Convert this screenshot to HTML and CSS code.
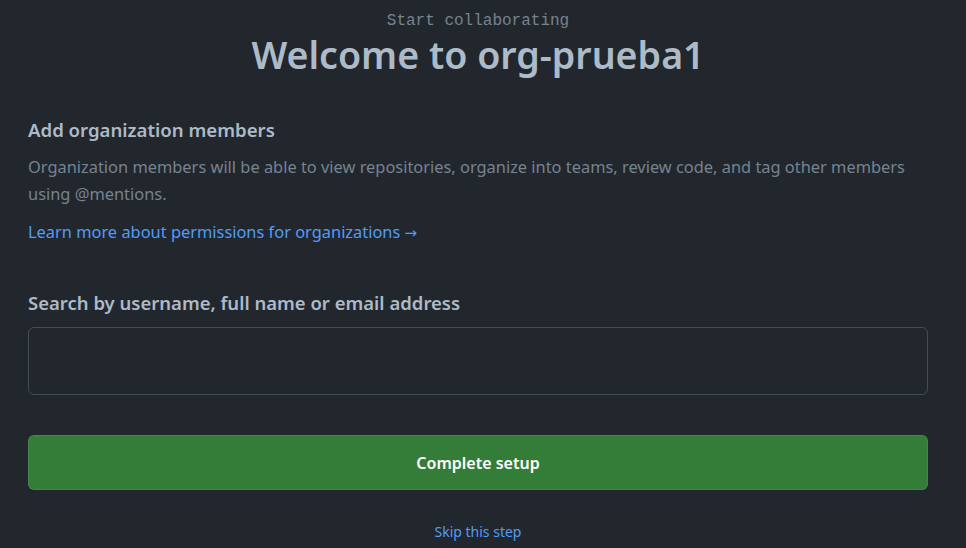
FILE: index.html
```html
<!DOCTYPE html>
<html lang="en">
<head>
<meta charset="utf-8">
<title>Welcome to org-prueba1</title>
<link rel="stylesheet" href="styles.css">
</head>
<body>
<main class="page">
  <header class="hero">
    <p class="eyebrow">Start collaborating</p>
    <h1 class="title">Welcome to org-prueba1</h1>
  </header>
  <section class="section">
    <h2 class="section-title">Add organization members</h2>
    <p class="section-desc">Organization members will be able to view repositories, organize into teams, review code, and tag other members using @mentions.</p>
    <a class="learn" href="#">Learn more about permissions for organizations <span class="arrow">→</span></a>
  </section>
  <form class="form">
    <label class="label" for="search">Search by username, full name or email address</label>
    <input class="input" id="search" type="text">
    <button class="btn" type="button">Complete setup</button>
    <a class="skip" href="#">Skip this step</a>
  </form>
</main>
</body>
</html>
```
FILE: styles.css
```css
html, body {
  margin: 0;
  padding: 0;
  background: #22272e;
}
body {
  font-family: "Noto Sans", "Open Sans", sans-serif;
  color: #adbac7;
}
.page {
  width: 900px;
  margin-left: 28px;
  display: flex;
  flex-direction: column;
}
.hero {
  display: flex;
  flex-direction: column;
  align-items: center;
  padding-top: 13px;
}
.eyebrow {
  margin: 0;
  font-family: "Liberation Mono", monospace;
  font-size: 16px;
  line-height: 16px;
  color: #768390;
}
.title {
  margin: 1px 0 0;
  font-size: 37.6px;
  line-height: 50px;
  font-weight: 600;
  color: #adbac7;
}
.section {
  padding-top: 36px;
  display: flex;
  flex-direction: column;
}
.section-title {
  margin: 0;
  font-size: 18.6px;
  line-height: 28px;
  font-weight: 600;
  color: #adbac7;
}
.section-desc {
  margin: 9px 0 0;
  font-size: 16.4px;
  line-height: 27px;
  color: #768390;
}
.learn {
  margin-top: 13px;
  font-size: 16.4px;
  line-height: 24px;
  color: #539bf5;
  text-decoration: none;
  align-self: flex-start;
}
.arrow {
  font-family: "DejaVu Sans", sans-serif;
  font-size: 15px;
}
.form {
  display: flex;
  flex-direction: column;
  padding-top: 45px;
}
.label {
  font-size: 18.5px;
  line-height: 26px;
  font-weight: 600;
  color: #adbac7;
}
.input {
  margin-top: 11px;
  height: 68px;
  box-sizing: border-box;
  background: #22272e;
  border: 1px solid #444c56;
  border-radius: 6px;
  color: #adbac7;
  font-size: 16px;
  padding: 0 12px;
}
.btn {
  margin-top: 40px;
  height: 55px;
  background: #347d39;
  border: 1px solid rgba(205, 217, 229, 0.1);
  border-radius: 6px;
  color: #ffffff;
  font-family: inherit;
  font-size: 16px;
  font-weight: 600;
}
.skip {
  margin-top: 32px;
  align-self: center;
  font-size: 14px;
  line-height: 20px;
  color: #539bf5;
  text-decoration: none;
}
```
